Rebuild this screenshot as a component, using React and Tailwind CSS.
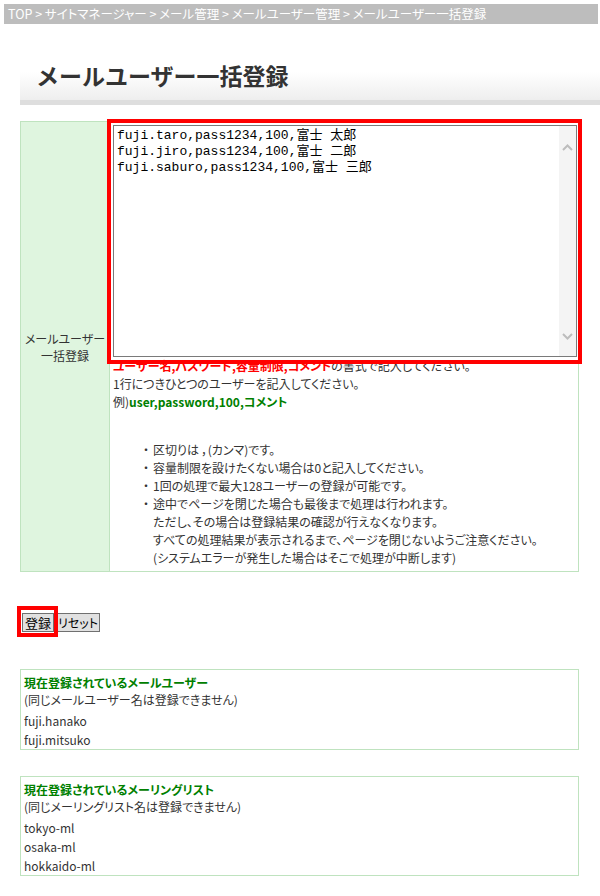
import React from "react";

function ScrollTrack() {
  return (
    <div className="flex w-[17px] shrink-0 flex-col items-center justify-between bg-[#f4f4f4] pb-[16px] pt-[18px]">
      <svg width="11" height="7" viewBox="0 0 11 7">
        <path d="M1 6 L5.5 1.5 L10 6" fill="none" stroke="#bdbdbd" strokeWidth="2" />
      </svg>
      <svg width="11" height="7" viewBox="0 0 11 7">
        <path d="M1 1 L5.5 5.5 L10 1" fill="none" stroke="#bdbdbd" strokeWidth="2" />
      </svg>
    </div>
  );
}

function Note({ children }) {
  return (
    <li className="flex">
      <span className="w-[10px] shrink-0">・</span>
      <div>{children}</div>
    </li>
  );
}

function ListBox({ title, note, items }) {
  return (
    <div className="ml-[20px] w-[559px] border border-[#bfe3bf] px-[3px] pt-[4px]">
      <p className="font-bold leading-[18px] text-[#008000]">{title}</p>
      <p className="leading-[16px]">{note}</p>
      <ul className="mt-[3px] leading-[19px]">
        {items.map((name) => (
          <li key={name}>{name}</li>
        ))}
      </ul>
    </div>
  );
}

export default function App() {
  const csv =
    "fuji.taro,pass1234,100,富士 太郎\nfuji.jiro,pass1234,100,富士 二郎\nfuji.saburo,pass1234,100,富士 三郎";

  return (
    <div className="relative min-h-[896px] w-[600px] bg-white pb-[20px] pt-[4px] text-[12px] text-[#333] font-['Noto_Sans_CJK_JP',sans-serif] [font-feature-settings:'palt']">
      {/* breadcrumb */}
      <div className="ml-[4px] mr-[2px] h-[20px] bg-[#bdbdbd] pl-[4px] text-[12.5px] leading-[20px] text-white">
        TOP &gt; サイトマネージャー &gt; メール管理 &gt; メールユーザー管理 &gt; メールユーザー一括登録
      </div>

      {/* page title */}
      <div className="ml-[20px] mt-[20px] h-[61px] border-b-[5px] border-[#dedede] bg-linear-to-b from-white from-50% to-[#eeeeee] pl-[16px] pt-[19px]">
        <h1 className="text-[23px] font-bold leading-[24px] text-[#333] [font-feature-settings:normal]">
          メールユーザー一括登録
        </h1>
      </div>

      {/* form table */}
      <div className="ml-[20px] mt-[16px] flex w-[559px] border border-[#bfe3bf]">
        <div className="flex w-[89px] shrink-0 items-center justify-center border-r border-[#bfe3bf] bg-[#dff5df] text-center leading-[17px]">
          メールユーザー
          <br />
          一括登録
        </div>
        <div className="flex-1 pb-[4px] pl-[3px] pr-[1px] pt-[3px]">
          <div className="flex h-[232px] border border-[#7a7a7a] bg-white">
            <textarea
              defaultValue={csv}
              className="flex-1 resize-none overflow-hidden px-[3px] pt-[2px] text-[13px] leading-[16px] text-black outline-none font-['Liberation_Mono','Noto_Sans_CJK_JP',monospace] [font-feature-settings:normal]"
            />
            <ScrollTrack />
          </div>
          <div className="leading-[18px]">
            <p>
              <span className="font-bold text-[#f00]">ユーザー名,パスワード,容量制限,コメント</span>
              の書式で記入してください。
            </p>
            <p>1行につきひとつのユーザーを記入してください。</p>
            <p>
              例)<span className="font-bold text-[#008000]">user,password,100,コメント</span>
            </p>
            <ul className="mt-[30px] pl-[30px]">
              <Note>区切りは ，(カンマ)です。</Note>
              <Note>容量制限を設けたくない場合は0と記入してください。</Note>
              <Note>1回の処理で最大128ユーザーの登録が可能です。</Note>
              <Note>
                途中でページを閉じた場合も最後まで処理は行われます。
                <br />
                ただし、その場合は登録結果の確認が行えなくなります。
                <br />
                すべての処理結果が表示されるまで、ページを閉じないようご注意ください。
                <br />
                (システムエラーが発生した場合はそこで処理が中断します)
              </Note>
            </ul>
          </div>
        </div>
      </div>

      {/* buttons */}
      <div className="ml-[22px] mt-[41px] flex gap-[2px]">
        <button className="h-[19px] border border-[#707070] bg-[#e1e1e1] px-[2px] text-[13px] leading-[17px] text-black">
          登録
        </button>
        <button className="h-[19px] border border-[#707070] bg-[#e1e1e1] px-[1px] text-[12px] leading-[17px] text-black">
          リセット
        </button>
      </div>

      <div className="mt-[37px]">
        <ListBox
          title="現在登録されているメールユーザー"
          note="(同じメールユーザー名は登録できません)"
          items={["fuji.hanako", "fuji.mitsuko"]}
        />
      </div>
      <div className="mt-[26px]">
        <ListBox
          title="現在登録されているメーリングリスト"
          note="(同じメーリングリスト名は登録できません)"
          items={["tokyo-ml", "osaka-ml", "hokkaido-ml"]}
        />
      </div>

      {/* red annotation frames */}
      <div className="pointer-events-none absolute left-[107px] top-[119px] h-[245px] w-[475px] border-[4px] border-[#f00]" />
      <div className="pointer-events-none absolute left-[17px] top-[606px] h-[31px] w-[41px] border-[4px] border-[#f00]" />
    </div>
  );
}
